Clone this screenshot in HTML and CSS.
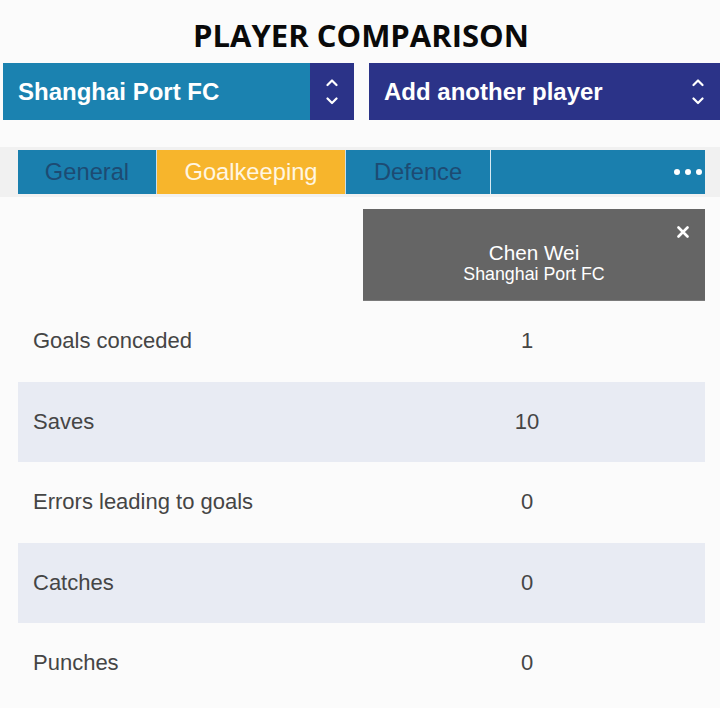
FILE: index.html
```html
<!DOCTYPE html>
<html lang="en">
<head>
<meta charset="utf-8">
<title>Player comparison</title>
<link rel="stylesheet" href="styles.css">
</head>
<body>
<header class="page-head">
  <h1 class="title">PLAYER COMPARISON</h1>
</header>
<div class="selects">
  <div class="select select-team">
    <span class="select-label">Shanghai Port FC</span>
    <span class="select-arrows">
      <svg width="12" height="28" viewBox="0 0 12 28"><path d="M1.5 7 L6 2.5 L10.5 7 M1.5 20.5 L6 25 L10.5 20.5" fill="none" stroke="#fff" stroke-width="2.2" stroke-linecap="round" stroke-linejoin="round"/></svg>
    </span>
  </div>
  <div class="select select-player">
    <span class="select-label">Add another player</span>
    <span class="select-arrows">
      <svg width="12" height="28" viewBox="0 0 12 28"><path d="M1.5 7 L6 2.5 L10.5 7 M1.5 20.5 L6 25 L10.5 20.5" fill="none" stroke="#fff" stroke-width="2.2" stroke-linecap="round" stroke-linejoin="round"/></svg>
    </span>
  </div>
</div>
<nav class="tabbar">
  <div class="tabs">
    <span class="tab tab-general">General</span>
    <span class="tab tab-active">Goalkeeping</span>
    <span class="tab tab-defence">Defence</span>
    <span class="tab tab-more"><span class="dot"></span><span class="dot"></span><span class="dot"></span></span>
  </div>
</nav>
<main class="table">
  <div class="head-row">
    <div class="head-spacer"></div>
    <div class="player-card">
      <div class="player-name">Chen Wei</div>
      <div class="player-club">Shanghai Port FC</div>
      <svg class="close" width="12" height="12" viewBox="0 0 12 12"><path d="M1.5 1.5 L10.5 10.5 M10.5 1.5 L1.5 10.5" stroke="#fff" stroke-width="2.6" stroke-linecap="round"/></svg>
    </div>
  </div>
  <div class="row"><span class="label">Goals conceded</span><span class="value">1</span></div>
  <div class="row alt"><span class="label">Saves</span><span class="value">10</span></div>
  <div class="row"><span class="label">Errors leading to goals</span><span class="value">0</span></div>
  <div class="row alt"><span class="label">Catches</span><span class="value">0</span></div>
  <div class="row"><span class="label">Punches</span><span class="value">0</span></div>
</main>
</body>
</html>
```

FILE: styles.css
```css
html, body {
  margin: 0;
  padding: 0;
  background: #fbfbfb;
}
body {
  font-family: "Liberation Sans", Arial, sans-serif;
  width: 720px;
  overflow: hidden;
}
.page-head {
  padding-top: 14px;
  height: 63px;
  box-sizing: border-box;
}
.title {
  margin: 0;
  text-align: center;
  font-family: "Open Sans", "Noto Sans", sans-serif;
  font-weight: 700;
  font-size: 31px;
  line-height: 42px;
  color: #0a0a0a;
  padding-left: 2px;
}
.selects {
  display: grid;
  grid-template-columns: 351px 351px;
  column-gap: 15px;
  padding-left: 3px;
}
.select {
  height: 57px;
  display: flex;
  align-items: center;
  color: #fff;
}
.select-team {
  background: #1b82b0;
}
.select-player {
  background: #2b3388;
}
.select-label {
  flex: 1;
  padding-left: 15px;
  font-weight: 700;
  font-size: 24px;
}
.select-arrows {
  width: 44px;
  height: 57px;
  display: flex;
  align-items: center;
  justify-content: center;
}
.select-team .select-arrows {
  background: #2b3388;
}
.tabbar {
  margin-top: 27px;
  background: #f1f1f1;
  padding: 3px 15px 3px 18px;
}
.tabs {
  display: flex;
  height: 44px;
  background: #1a7fae;
}
.tab {
  display: flex;
  align-items: center;
  justify-content: center;
  font-size: 23.7px;
  color: #1d4b73;
  box-sizing: border-box;
}
.tab-general {
  width: 139px;
  border-right: 1px solid #c9dfe9;
}
.tab-active {
  width: 189px;
  background: #f7b52c;
  color: #fff6e2;
  border-right: 1px solid #c9dfe9;
}
.tab-defence {
  width: 145px;
  border-right: 1px solid #d6e9f2;
}
.tab-more {
  flex: 1;
  justify-content: flex-end;
  gap: 5px;
  padding-right: 3px;
}
.dot {
  width: 6px;
  height: 6px;
  border-radius: 50%;
  background: #fff;
}
.table {
  margin: 12px 15px 0 18px;
}
.head-row {
  display: grid;
  grid-template-columns: 331px 356px;
}
.player-card {
  position: relative;
  margin-left: 14px;
  background: #656565;
  color: #fff;
  text-align: center;
  padding: 33px 0 16px;
  border-bottom: 1px solid #7a7a7a;
}
.player-name {
  font-size: 20.7px;
  line-height: 22px;
}
.player-club {
  font-size: 17.8px;
  line-height: 20px;
}
.close {
  position: absolute;
  top: 17px;
  right: 16px;
}
.row {
  display: grid;
  grid-template-columns: 331px 356px;
  height: 80.5px;
  align-items: center;
  color: #454545;
  font-size: 22px;
}
.row.alt {
  background: #e8ebf3;
}
.label {
  padding-left: 15px;
}
.value {
  text-align: center;
}
```
